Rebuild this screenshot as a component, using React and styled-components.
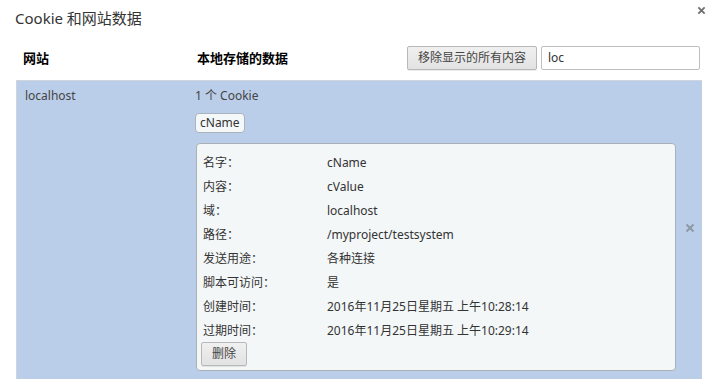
import React from "react";
import styled, { createGlobalStyle } from "styled-components";

const Global = createGlobalStyle`
  html, body { margin: 0; padding: 0; background: #fff; }
  body {
    font-family: "Noto Sans", "Noto Sans CJK SC", sans-serif;
    font-size: 12px;
    color: #333;
  }
`;

const Dialog = styled.div`
  width: 710px;
  height: 379px;
  overflow: hidden;
  background: #fff;
  display: flex;
  flex-direction: column;
`;

const TitleBar = styled.div`
  height: 35px;
  display: flex;
  align-items: flex-start;
  justify-content: space-between;
  padding-left: 15px;
  padding-right: 2px;
`;

const Title = styled.h1`
  margin: 0;
  margin-top: 8px;
  font-size: 15px;
  font-weight: normal;
  line-height: 20px;
  color: #333;
`;

const CloseBtn = styled.button`
  border: 0;
  background: none;
  padding: 0;
  margin-top: 4px;
  width: 14px;
  height: 12px;
  display: flex;
  align-items: center;
  justify-content: center;
  cursor: pointer;
`;

const HeaderRow = styled.div`
  display: grid;
  grid-template-columns: 174px 1fr;
  align-items: center;
  padding-left: 23px;
  padding-right: 10px;
  height: 45px;
`;

const ColHead = styled.div`
  font-weight: bold;
  font-size: 13px;
  color: #000;
`;

const HeadRight = styled.div`
  display: flex;
  align-items: center;
  justify-content: space-between;
`;

const Tools = styled.div`
  display: flex;
  gap: 4px;
  align-items: center;
`;

const Button = styled.button`
  font-family: inherit;
  font-size: 12px;
  color: #444;
  height: 24px;
  padding: 0 ${(p) => (p.$small ? "10px" : "10px")};
  border: 1px solid #b8b8b8;
  border-radius: 2px;
  background: linear-gradient(#f0f0f0, #e2e2e2);
  box-shadow: 0 1px 0 rgba(0, 0, 0, 0.08);
  line-height: 22px;
`;

const Search = styled.input`
  font-family: inherit;
  font-size: 12px;
  color: #333;
  width: 159px;
  height: 24px;
  box-sizing: border-box;
  border: 1px solid #bfbfbf;
  border-radius: 2px;
  padding: 0 6px;
  outline: none;
`;

const List = styled.div`
  flex: 1;
  margin-left: 16px;
  width: 686px;
  box-sizing: border-box;
  border-left: 1px solid #cfd5dc;
  border-top: 1px solid #cfd5dc;
  background: #bbcee9;
`;

const SiteRow = styled.div`
  display: grid;
  grid-template-columns: 178px 480px 1fr;
  padding-top: 6px;
`;

const SiteName = styled.div`
  padding-left: 8px;
  line-height: 18px;
  color: #444;
`;

const DataCol = styled.div`
  display: flex;
  flex-direction: column;
  align-items: flex-start;
`;

const Count = styled.div`
  line-height: 18px;
  color: #444;
`;

const Chip = styled.div`
  margin-top: 8px;
  height: 20px;
  box-sizing: border-box;
  border: 1px solid #a9b3bd;
  border-radius: 4px;
  background: #f5f8f9;
  padding: 0 4px;
  line-height: 18px;
  color: #333;
`;

const Card = styled.div`
  margin-top: 10px;
  margin-left: 1px;
  width: 480px;
  box-sizing: border-box;
  border: 1px solid #a9b0b6;
  border-radius: 4px;
  background: #f4f7f8;
  padding: 6px 0 4px 4px;
`;

const Field = styled.div`
  display: grid;
  grid-template-columns: 124px 1fr;
  height: 24px;
  align-items: center;
  padding-left: 2px;
  color: #333;
`;

const RemoveCol = styled.div`
  display: flex;
  align-items: center;
  justify-content: center;
  padding-left: 2px;
  padding-bottom: 2px;
`;

const Cross = ({ size, color }) => (
  <svg width={size} height={size} viewBox="0 0 10 10">
    <path d="M1.5 1.5 L8.5 8.5 M8.5 1.5 L1.5 8.5" stroke={color} strokeWidth="2" />
  </svg>
);

const fields = [
  ["名字：", "cName"],
  ["内容：", "cValue"],
  ["域：", "localhost"],
  ["路径：", "/myproject/testsystem"],
  ["发送用途：", "各种连接"],
  ["脚本可访问：", "是"],
  ["创建时间：", "2016年11月25日星期五 上午10:28:14"],
  ["过期时间：", "2016年11月25日星期五 上午10:29:14"],
];

export default function App() {
  return (
    <>
      <Global />
      <Dialog>
        <TitleBar>
          <Title>Cookie 和网站数据</Title>
          <CloseBtn aria-label="关闭">
            <Cross size={9} color="#6f6f6f" />
          </CloseBtn>
        </TitleBar>
        <HeaderRow>
          <ColHead>网站</ColHead>
          <HeadRight>
            <ColHead>本地存储的数据</ColHead>
            <Tools>
              <Button>移除显示的所有内容</Button>
              <Search defaultValue="loc" />
            </Tools>
          </HeadRight>
        </HeaderRow>
        <List>
          <SiteRow>
            <SiteName>localhost</SiteName>
            <DataCol>
              <Count>1 个 Cookie</Count>
              <Chip>cName</Chip>
              <Card>
                {fields.map(([k, v]) => (
                  <Field key={k}>
                    <span>{k}</span>
                    <span>{v}</span>
                  </Field>
                ))}
                <Button $small>删除</Button>
              </Card>
            </DataCol>
            <RemoveCol>
              <Cross size={10} color="#8d98a6" />
            </RemoveCol>
          </SiteRow>
        </List>
      </Dialog>
    </>
  );
}
